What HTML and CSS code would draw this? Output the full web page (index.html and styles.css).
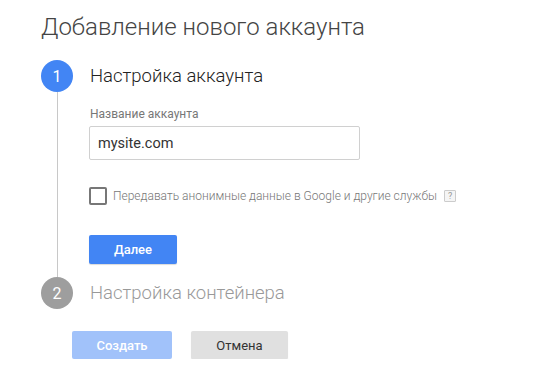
FILE: index.html
```html
<!DOCTYPE html>
<html lang="ru">
<head>
<meta charset="utf-8">
<title>Добавление нового аккаунта</title>
<link rel="stylesheet" href="styles.css">
</head>
<body>
<div class="page">
  <h1 class="title">Добавление нового аккаунта</h1>
  <div class="step step-active">
    <div class="rail">
      <div class="num num-active">1</div>
      <div class="line"></div>
    </div>
    <div class="step-body">
      <div class="step-head">Настройка аккаунта</div>
      <label class="field-label">Название аккаунта</label>
      <div class="input">mysite.com</div>
      <div class="check-row">
        <span class="checkbox"></span>
        <span class="check-text">Передавать анонимные данные в Google и другие службы</span>
        <span class="help">?</span>
      </div>
      <button class="btn btn-primary">Далее</button>
    </div>
  </div>
  <div class="step">
    <div class="rail">
      <div class="num num-idle">2</div>
    </div>
    <div class="step-body">
      <div class="step-head step-head-idle">Настройка контейнера</div>
    </div>
  </div>
  <div class="actions">
    <button class="btn btn-disabled">Создать</button>
    <button class="btn btn-grey">Отмена</button>
  </div>
</div>
</body>
</html>
```

FILE: styles.css
```css
html, body {
  margin: 0;
  padding: 0;
  background: #ffffff;
}
body {
  font-family: Roboto, "Liberation Sans", Arial, sans-serif;
  color: #333;
}
.page {
  padding: 12px 0 0 41px;
}
.title {
  margin: 0 0 18px 0;
  font-size: 24px;
  font-weight: 300;
  color: #444;
  line-height: 30px;
}
.step {
  display: flex;
  gap: 17px;
}
.rail {
  width: 32px;
  display: flex;
  flex-direction: column;
  align-items: center;
}
.num {
  width: 32px;
  height: 32px;
  border-radius: 50%;
  color: #fff;
  font-size: 16px;
  display: flex;
  align-items: center;
  justify-content: center;
  flex: none;
}
.num-active { background: #4285f4; }
.num-idle { background: #9e9e9e; }
.line {
  width: 1px;
  flex: 1;
  background: #c8c8c8;
}
.step-body {
  display: flex;
  flex-direction: column;
  align-items: flex-start;
}
.step-active .step-body {
  padding-bottom: 13px;
}
.step-head {
  height: 32px;
  display: flex;
  align-items: center;
  font-size: 18.5px;
  font-weight: 300;
  color: #222;
}
.step-head-idle {
  color: #999;
}
.field-label {
  margin-top: 15px;
  font-size: 12px;
  color: #777;
  line-height: 15px;
}
.input {
  margin-top: 4px;
  margin-left: -1px;
  width: 261px;
  height: 32px;
  border: 1px solid #d0d0d0;
  border-radius: 2px;
  display: flex;
  align-items: center;
  padding-left: 8px;
  font-size: 14.5px;
  color: #333;
}
.check-row {
  margin-top: 27px;
  display: flex;
  align-items: center;
  margin-left: -1px;
}
.checkbox {
  width: 14px;
  height: 14px;
  border: 2px solid #777;
  border-radius: 2px;
}
.check-text {
  margin-left: 6px;
  font-size: 12px;
  font-weight: 300;
  color: #777;
}
.help {
  margin-left: 7px;
  width: 10px;
  height: 10px;
  border: 1px solid #ccc;
  background: #f5f5f5;
  color: #999;
  font-size: 9px;
  line-height: 10px;
  text-align: center;
  border-radius: 1px;
}
.btn {
  border: none;
  border-radius: 2px;
  font-family: Roboto, "Liberation Sans", Arial, sans-serif;
  font-size: 13px;
  height: 29px;
  padding: 0;
  cursor: pointer;
}
.btn-primary {
  margin-top: 30px;
  margin-left: -1px;
  width: 88px;
  background: #4285f4;
  color: #fff;
  font-weight: 500;
  box-shadow: 0 1px 1px rgba(0,0,0,0.15);
}
.actions {
  display: flex;
  gap: 19px;
  margin-top: 22px;
  margin-left: 31px;
}
.btn-disabled {
  width: 100px;
  height: 28px;
  background: #a1c2fa;
  color: #fff;
  font-weight: 500;
}
.btn-grey {
  width: 97px;
  height: 28px;
  background: #e0e0e0;
  color: #333;
  font-weight: 400;
  box-shadow: 0 1px 1px rgba(0,0,0,0.1);
}
```
